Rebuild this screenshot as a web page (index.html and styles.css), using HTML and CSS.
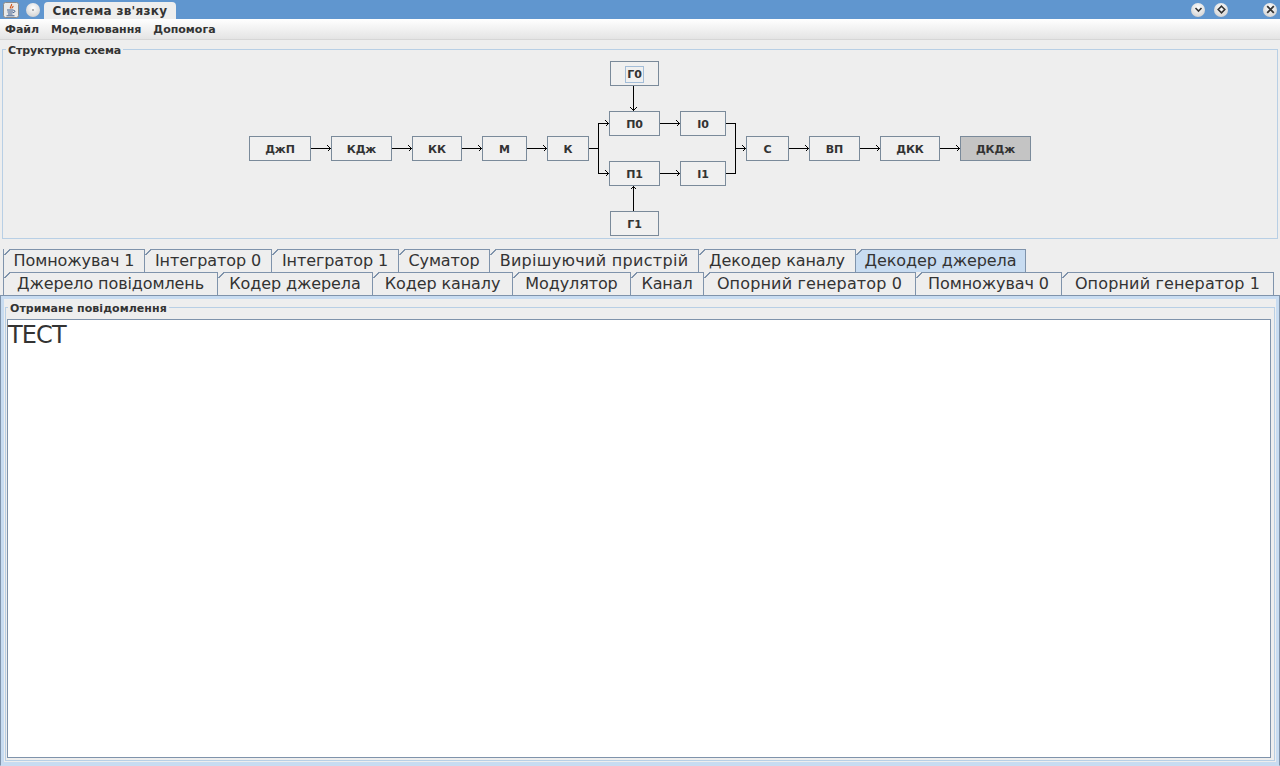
FILE: index.html
```html
<!DOCTYPE html>
<html lang="uk">
<head>
  <meta charset="UTF-8">
  <title>Система зв'язку</title>
  <link rel="stylesheet" href="styles.css">
</head>
<body>
  <div class="titlebar">
    <svg class="app-icon" width="16" height="16" viewBox="0 0 16 16">
      <rect x="0.5" y="0.5" width="15" height="15" rx="2" fill="#e8e8e8" stroke="#8a8a8a"/>
      <path d="M8.5 2c1 1.500-2 2.500-1 4.500M10 4c.5 1-1.500 1.500-1 2.500" fill="none" stroke="#d2571c" stroke-width="1.200"/>
      <path d="M4 8h6.500M4.500 10h5.500M5 12h4.500M3.500 13.800h8M10.500 8.500c2-.5 2 2-.5 2.200" fill="none" stroke="#3f5f8f" stroke-width="1"/>
    </svg>
    <span class="win-btn menu-btn"><i class="dot"></i></span>
    <div class="title-tab">Система зв'язку</div>
    <div class="win-controls">
      <span class="win-btn">
        <svg width="9" height="9" viewBox="0 0 9 9"><path d="M1.500 3l3 3 3-3" fill="none" stroke="#333" stroke-width="1.600"/></svg>
      </span>
      <span class="win-btn gap-btn">
        <svg width="9" height="9" viewBox="0 0 9 9"><path d="M4.500 1.200L7.800 4.500 4.500 7.800 1.200 4.500z" fill="none" stroke="#333" stroke-width="1.600"/></svg>
      </span>
      <span class="win-btn close-btn">
        <svg width="9" height="9" viewBox="0 0 9 9"><path d="M1.200 1.200l6.600 6.600M7.800 1.200L1.200 7.800" fill="none" stroke="#333" stroke-width="1.800"/></svg>
      </span>
    </div>
  </div>

  <div class="menubar">
    <span class="menu-item">Файл</span>
    <span class="menu-item">Моделювання</span>
    <span class="menu-item">Допомога</span>
  </div>

  <fieldset class="scheme">
    <legend>Структурна схема</legend>
    <div class="canvas">
      <svg class="wires" width="1274" height="188" viewBox="3 50 1274 188">
        <path d="M311 148.500H331M327.500 145.500l3 3-3 3
                 M392 148.500H412M408.500 145.500l3 3-3 3
                 M462 148.500H482M478.500 145.500l3 3-3 3
                 M527 148.500H547M543.500 145.500l3 3-3 3
                 M589 148.500H598.500
                 M609 123.500H598.500V173.500H609
                 M605.500 120.500l3 3-3 3M605.500 170.500l3 3-3 3
                 M633.500 86V111M630.500 107.500l3 3 3-3
                 M633.500 211V186M630.500 189.500l3-3 3 3
                 M660 123.500H680M676.500 120.500l3 3-3 3
                 M660 173.500H680M676.500 170.500l3 3-3 3
                 M726 123.500H735.500V173.500H726
                 M735.500 148.500H746M742.500 145.500l3 3-3 3
                 M789 148.500H809M805.500 145.500l3 3-3 3
                 M860 148.500H880M876.500 145.500l3 3-3 3
                 M940 148.500H960M956.500 145.500l3 3-3 3"
              fill="none" stroke="#000" shape-rendering="crispEdges"/>
      </svg>
      <div class="node n-djp">ДжП</div>
      <div class="node n-kdj">КДж</div>
      <div class="node n-kk">КК</div>
      <div class="node n-m">М</div>
      <div class="node n-k">К</div>
      <div class="node n-g0"><span class="focus">Г0</span></div>
      <div class="node n-p0">П0</div>
      <div class="node n-i0">І0</div>
      <div class="node n-p1">П1</div>
      <div class="node n-i1">І1</div>
      <div class="node n-g1">Г1</div>
      <div class="node n-s">С</div>
      <div class="node n-vp">ВП</div>
      <div class="node n-dkk">ДКК</div>
      <div class="node n-dkdj active">ДКДж</div>
    </div>
  </fieldset>

  <div class="tabs">
    <div class="tab-row top-row">
      <div class="tab">Помножувач 1</div>
      <div class="tab">Інтегратор 0</div>
      <div class="tab">Інтегратор 1</div>
      <div class="tab">Суматор</div>
      <div class="tab wide">Вирішуючий пристрій</div>
      <div class="tab">Декодер каналу</div>
      <div class="tab selected">Декодер джерела</div>
    </div>
    <div class="tab-row bottom-row">
      <div class="tab">Джерело повідомлень</div>
      <div class="tab">Кодер джерела</div>
      <div class="tab">Кодер каналу</div>
      <div class="tab">Модулятор</div>
      <div class="tab">Канал</div>
      <div class="tab wider">Опорний генератор 0</div>
      <div class="tab">Помножувач 0</div>
      <div class="tab wider">Опорний генератор 1</div>
    </div>
  </div>

  <div class="tab-panel">
    <fieldset class="received">
      <legend>Отримане повідомлення</legend>
      <div class="message">ТЕСТ</div>
    </fieldset>
  </div>
</body>
</html>
```

FILE: styles.css
```css
html, body {
  margin: 0;
  height: 766px;
  overflow: hidden;
}

body {
  display: flex;
  flex-direction: column;
  background-color: #eeeeee;
  color: #333333;
  font-family: "DejaVu Sans", sans-serif;
}

.titlebar {
  display: flex;
  align-items: center;
  height: 19px;
  background-color: #6096cf;
  flex-shrink: 0;
}

.app-icon {
  margin-left: 3px;
  margin-right: 7px;
}

.win-btn {
  display: flex;
  align-items: center;
  justify-content: center;
  width: 14px;
  height: 14px;
  border-radius: 50%;
  background: radial-gradient(circle at 50% 35%, #ffffff, #d8d8d8 70%, #b5b5b5);
}

.dot {
  width: 2px;
  height: 2px;
  background-color: #999999;
  border-radius: 50%;
}

.title-tab {
  align-self: flex-end;
  width: 132px;
  height: 17px;
  margin-left: 4px;
  background-color: #eeeeee;
  border-radius: 4px 4px 0 0;
  font-size: 12px;
  font-weight: bold;
  line-height: 18px;
  text-align: center;
  letter-spacing: 0.3px;
}

.win-controls {
  display: flex;
  margin-left: auto;
  margin-right: 3px;
}

.gap-btn {
  margin-left: 9px;
  margin-right: 35px;
}

.menubar {
  display: flex;
  gap: 12px;
  height: 21px;
  padding-left: 5px;
  flex-shrink: 0;
  box-sizing: border-box;
  background: linear-gradient(#ffffff, #e4e4e4);
  border-bottom: 1px solid #d6d6d6;
  font-size: 11px;
  font-weight: bold;
  line-height: 22px;
}

.scheme {
  height: 195px;
  margin: 2px 2px 0;
  padding: 0;
  box-sizing: content-box;
  border: 1px solid #b8cfe5;
  flex-shrink: 0;
}

.scheme legend,
.received legend {
  margin-left: 3px;
  padding: 2px 2px 0;
  font-size: 11px;
  font-weight: bold;
  line-height: 13px;
}

.scheme legend {
  letter-spacing: -0.1px;
}

.canvas {
  position: relative;
  height: 188px;
  margin-top: -7px;
}

.wires {
  position: absolute;
  top: 0;
  left: 0;
}

.node {
  position: absolute;
  display: flex;
  align-items: center;
  justify-content: center;
  height: 25px;
  padding-top: 2px;
  box-sizing: border-box;
  background-color: #f0f0f0;
  border: 1px solid #7a8a9a;
  font-size: 11px;
  font-weight: bold;
  letter-spacing: -0.1px;
}

.node.active {
  background-color: #c4c4c4;
}

.focus {
  margin-top: -1px;
  padding: 1px 1px;
  border: 1px solid #a3bdd8;
}

/* page x - 3, page y - 50 */
.n-djp { left: 246px; top: 86px; width: 62px; }
.n-kdj { left: 328px; top: 86px; width: 61px; }
.n-kk { left: 409px; top: 86px; width: 50px; }
.n-m { left: 479px; top: 86px; width: 45px; }
.n-k { left: 544px; top: 86px; width: 42px; }
.n-g0 { left: 607px; top: 11px; width: 49px; }
.n-p0 { left: 606px; top: 61px; width: 51px; }
.n-i0 { left: 677px; top: 61px; width: 46px; }
.n-p1 { left: 606px; top: 111px; width: 51px; }
.n-i1 { left: 677px; top: 111px; width: 46px; }
.n-g1 { left: 607px; top: 161px; width: 49px; }
.n-s { left: 743px; top: 86px; width: 43px; }
.n-vp { left: 806px; top: 86px; width: 51px; }
.n-dkk { left: 877px; top: 86px; width: 60px; }
.n-dkdj { left: 957px; top: 86px; width: 71px; }

.tabs {
  margin-top: 10px;
  padding-left: 3px;
  flex-shrink: 0;
}

.tab-row {
  display: flex;
  height: 23px;
}

.tab {
  position: relative;
  box-sizing: border-box;
  height: 23px;
  border-top: 1px solid #7f93ab;
  border-right: 1px solid #7f93ab;
  font-size: 16px;
  line-height: 21px;
  letter-spacing: -0.1px;
  white-space: nowrap;
  text-align: center;
}

.tab-row .tab:first-child {
  border-left: 1px solid #7f93ab;
}

.tab.wide {
  letter-spacing: 0.3px;
}

.tab.wider {
  letter-spacing: 0.15px;
}

.top-row .tab:nth-child(1) { width: 142px; }
.top-row .tab:nth-child(2) { width: 127px; }
.top-row .tab:nth-child(3) { width: 127px; }
.top-row .tab:nth-child(4) { width: 91px; }
.top-row .tab:nth-child(5) { width: 209px; }
.top-row .tab:nth-child(6) { width: 157px; }
.top-row .tab:nth-child(7) { width: 170px; }

.bottom-row .tab:nth-child(1) { width: 215px; }
.bottom-row .tab:nth-child(2) { width: 155px; }
.bottom-row .tab:nth-child(3) { width: 140px; }
.bottom-row .tab:nth-child(4) { width: 118px; }
.bottom-row .tab:nth-child(5) { width: 73px; }
.bottom-row .tab:nth-child(6) { width: 212px; }
.bottom-row .tab:nth-child(7) { width: 146px; }
.bottom-row .tab:nth-child(8) { width: 212px; }

.tab.selected {
  background-color: #c8dcf1;
}

/* clipped top-left corner of a tab */
.tab::before {
  content: "";
  position: absolute;
  top: -1px;
  left: 0;
  width: 6px;
  height: 6px;
  background: linear-gradient(135deg, #eeeeee 46%, #7f93ab 46% 62%, transparent 62%);
}

.tab-panel {
  flex: 1;
  display: flex;
  box-sizing: border-box;
  min-height: 0;
  padding: 4px 4px 4px;
  background-color: #eeeeee;
  border: 1px solid #7f93ab;
  border-bottom-color: #c8dcf1;
  box-shadow: inset 0 0 0 3px #c8dcf1;
}

.received {
  flex: 1;
  display: flex;
  min-width: 0;
  margin: 0;
  padding: 0 3px 2px 1px;
  border: 1px solid #b8cfe5;
}

.received legend {
  margin-left: 1px;
  letter-spacing: 0.05px;
}

.message {
  flex: 1;
  box-sizing: border-box;
  margin-top: 4px;
  background-color: #ffffff;
  border: 1px solid #7f93ab;
  font-size: 24px;
  line-height: 30px;
  letter-spacing: -0.9px;
}
```
